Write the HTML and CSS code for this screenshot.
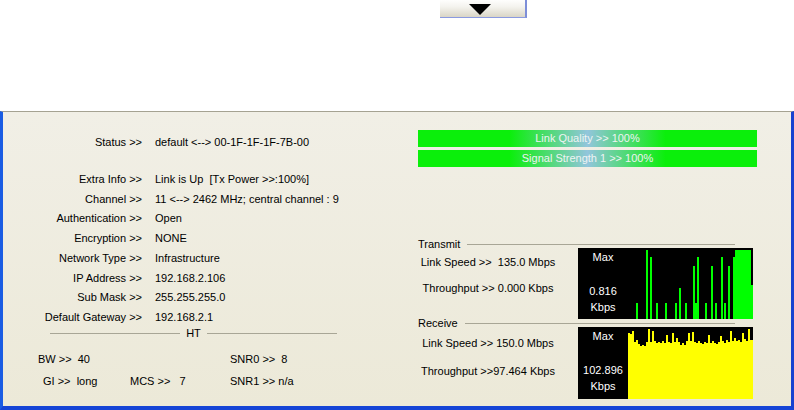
FILE: index.html
```html
<!DOCTYPE html>
<html>
<head>
<meta charset="utf-8">
<link rel="stylesheet" href="styles.css">
</head>
<body>
<div class="toolbar">
  <div class="dropbtn"><span class="tri"></span></div>
</div>
<div class="panel">
  <div class="info">
    <div class="row first"><span class="lbl">Status &gt;&gt;</span><span>default &lt;--&gt; 00-1F-1F-1F-7B-00</span></div>
    <div class="row"><span class="lbl">Extra Info &gt;&gt;</span><span>Link is Up&nbsp; [Tx Power &gt;&gt;:100%]</span></div>
    <div class="row"><span class="lbl">Channel &gt;&gt;</span><span>11 &lt;--&gt; 2462 MHz; central channel : 9</span></div>
    <div class="row"><span class="lbl">Authentication &gt;&gt;</span><span>Open</span></div>
    <div class="row"><span class="lbl">Encryption &gt;&gt;</span><span>NONE</span></div>
    <div class="row"><span class="lbl">Network Type &gt;&gt;</span><span>Infrastructure</span></div>
    <div class="row"><span class="lbl">IP Address &gt;&gt;</span><span>192.168.2.106</span></div>
    <div class="row"><span class="lbl">Sub Mask &gt;&gt;</span><span>255.255.255.0</span></div>
    <div class="row"><span class="lbl">Default Gateway &gt;&gt;</span><span>192.168.2.1</span></div>
    <div class="ht"><span class="ln"></span><span class="ht-t">HT</span><span class="ln"></span></div>
    <div class="htgrid">
      <span>BW &gt;&gt;&nbsp; 40</span><span></span><span>SNR0 &gt;&gt;&nbsp; 8</span>
      <span class="gi">GI &gt;&gt;&nbsp; long</span><span>MCS &gt;&gt;&nbsp;&nbsp; 7</span><span>SNR1 &gt;&gt; n/a</span>
    </div>
  </div>
  <div class="stats">
    <div class="bar">Link Quality &gt;&gt; 100%</div>
    <div class="bar">Signal Strength 1 &gt;&gt; 100%</div>
    <div class="sec-h tx-h"><span>Transmit</span><span class="ln"></span></div>
    <div class="sec">
      <div class="sec-text"><div>Link Speed &gt;&gt;&nbsp; 135.0 Mbps</div><div class="l2">Throughput &gt;&gt; 0.000 Kbps</div></div>
      <div class="graph">
        <div class="glbl"><div>Max</div><div class="gv">0.816</div><div>Kbps</div></div>
        <svg viewBox="0 0 125 71" width="125" height="71" fill="#00ff00">
          <rect x="8" y="55" width="2" height="16"/>
          <rect x="18" y="2" width="2" height="69"/>
          <rect x="22" y="9" width="2" height="62"/>
          <rect x="28" y="55" width="2" height="16"/>
          <rect x="37" y="55" width="2" height="16"/>
          <rect x="47" y="55" width="2" height="16"/>
          <rect x="51" y="40" width="2" height="31"/>
          <rect x="57" y="55" width="2" height="16"/>
          <rect x="65" y="18" width="2" height="53"/>
          <rect x="67" y="55" width="2" height="16"/>
          <rect x="69" y="9" width="2" height="62"/>
          <rect x="77" y="55" width="2" height="16"/>
          <rect x="83" y="18" width="2" height="53"/>
          <rect x="87" y="55" width="2" height="16"/>
          <rect x="93" y="9" width="2" height="62"/>
          <rect x="96" y="55" width="2" height="16"/>
          <rect x="100" y="18" width="2" height="53"/>
          <rect x="105" y="9" width="2" height="62"/>
          <rect x="107" y="2" width="16" height="69"/>
          <rect x="123" y="37" width="2" height="34"/>
        </svg>
      </div>
    </div>
    <div class="sec-h"><span>Receive</span><span class="ln"></span></div>
    <div class="sec rx">
      <div class="sec-text"><div>Link Speed &gt;&gt; 150.0 Mbps</div><div class="l2">Throughput &gt;&gt;97.464 Kbps</div></div>
      <div class="graph">
        <div class="glbl"><div>Max</div><div class="gv">102.896</div><div>Kbps</div></div>
        <svg viewBox="0 0 125 72" width="125" height="72">
          <path fill="#ffff00" d="M0 72 V6 H2 V7 H4 V4 H6 V15 H8 V13 H10 V17 H12 V19 H14 V18 H16 V19 H18 V15 H20 V2 H22 V15 H24 V4 H26 V14 H28 V16 H30 V15 H32 V16 H34 V14 H36 V16 H38 V8 H40 V15 H42 V16 H44 V6 H46 V15 H48 V11 H50 V15 H52 V18 H54 V16 H56 V18 H58 V14 H60 V6 H62 V14 H64 V5 H66 V15 H68 V16 H70 V14 H72 V16 H74 V17 H76 V15 H78 V16 H80 V8 H82 V16 H84 V14 H86 V16 H88 V17 H90 V15 H92 V9 H94 V14 H96 V16 H98 V13 H100 V15 H102 V4 H104 V14 H106 V11 H108 V14 H110 V13 H112 V15 H114 V6 H116 V12 H118 V14 H120 V2 H122 V13 H125 V72 Z"/>
        </svg>
      </div>
    </div>
  </div>
</div>
</body>
</html>
```

FILE: styles.css
```css
html, body {
  margin: 0;
  padding: 0;
}
body {
  background: #ffffff;
  font-family: "Liberation Sans", Arial, sans-serif;
  font-size: 11px;
  color: #000;
  width: 794px;
  height: 410px;
  overflow: hidden;
}
.toolbar {
  height: 111px;
}
.dropbtn {
  box-sizing: border-box;
  margin-left: 440px;
  width: 87px;
  height: 18px;
  padding: 4px 0 0 29px;
  display: flex;
  border-right: 2px solid #7d8ed8;
  border-bottom: 1px solid #8a9ae0;
  background: linear-gradient(#fefefd, #f4f3ee 40%, #d9d5c6);
}
.tri {
  width: 0;
  height: 0;
  border-left: 11px solid transparent;
  border-right: 11px solid transparent;
  border-top: 11px solid #000;
}
.panel {
  box-sizing: border-box;
  display: flex;
  height: 299px;
  border-top: 1px solid #a5a292;
  border-left: 3px solid #1a5ce3;
  border-right: 3px solid #1742d0;
  border-bottom: 4px solid #1544d6;
  background: linear-gradient(#f1efe6, #ece9d8);
}
.info {
  box-sizing: border-box;
  width: 415px;
  padding-top: 20px;
}
.row {
  display: grid;
  grid-template-columns: 139px auto;
  column-gap: 13px;
  height: 19.75px;
  align-items: center;
  white-space: nowrap;
}
.row.first {
  margin-bottom: 17.25px;
}
.lbl {
  text-align: right;
}
.ht {
  display: flex;
  align-items: center;
  margin-left: 47px;
  width: 287px;
  height: 12px;
}
.ht .ln {
  flex: 1;
  border-top: 1px solid #a8a696;
}
.ht-t {
  margin: 0 6px;
}
.htgrid {
  display: grid;
  grid-template-columns: 92px 100px auto;
  grid-auto-rows: 20px;
  row-gap: 2px;
  align-items: center;
  padding-left: 35px;
  margin-top: 10px;
  white-space: nowrap;
}
.gi {
  padding-left: 5px;
}
.stats {
  box-sizing: border-box;
  width: 339px;
  padding-top: 18px;
  display: flex;
  flex-direction: column;
}
.bar {
  height: 17px;
  line-height: 17px;
  text-align: center;
  color: #eef3f3;
  background: linear-gradient(to right, #0bef0b 0%, #0bef0b 27%, #92c5dc 50%, #0bef0b 73%, #0bef0b 100%);
}
.bar + .bar {
  margin-top: 3px;
}
.sec-h {
  display: flex;
  align-items: center;
  height: 8px;
  line-height: 8px;
  white-space: nowrap;
}
.tx-h {
  margin-top: 73px;
}
.sec-h .ln {
  flex: 1;
  border-top: 1px solid #a8a696;
  margin-left: 7px;
  margin-right: 22px;
}
.sec {
  display: flex;
  height: 71px;
}
.sec.rx {
  height: 72px;
}
.sec-text {
  width: 140px;
  margin-right: 20px;
  text-align: center;
  padding-top: 6px;
  line-height: 16px;
  white-space: nowrap;
}
.sec-text .l2 {
  margin-top: 10px;
}
.rx .sec-text {
  padding-top: 8px;
}
.rx .sec-text .l2 {
  margin-top: 12px;
}
.graph {
  display: flex;
  width: 175px;
  background: #000;
  color: #fff;
}
.glbl {
  width: 50px;
  text-align: center;
  line-height: 16px;
  padding-top: 1px;
}
.gv {
  margin-top: 18px;
}
.graph svg {
  display: block;
}
```
